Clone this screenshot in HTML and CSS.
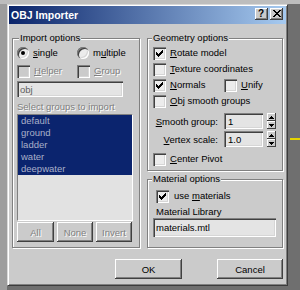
FILE: index.html
```html
<!DOCTYPE html>
<html>
<head>
<meta charset="utf-8">
<link rel="stylesheet" href="styles.css">
</head>
<body>
<div class="desk">
  <div class="dialog">
    <div class="titlebar">
      <span class="title">OBJ Importer</span>
      <div class="tbuttons">
        <span class="tbtn help">?</span>
        <span class="tbtn close"><svg width="8" height="7" viewBox="0 0 8 7" shape-rendering="crispEdges"><path d="M0 0h2v1H0zM6 0h2v1H6zM1 1h2v1H1zM5 1h2v1H5zM2 2h4v1H2zM3 3h2v1H3zM2 4h4v1H2zM1 5h2v1H1zM5 5h2v1H5zM0 6h2v1H0zM6 6h2v1H6z"/></svg></span>
      </div>
    </div>
    <div class="client">
      <div class="groups">
        <fieldset class="group import">
          <legend>Import options</legend>
          <div class="pair radios">
            <span class="opt"><span class="radio"><span class="dot"></span></span><span class="lbl"><u>s</u>ingle</span></span>
            <span class="opt"><span class="radio"></span><span class="lbl">m<u>u</u>ltiple</span></span>
          </div>
          <div class="pair checks disabled">
            <span class="opt"><span class="cb off"></span><span class="lbl"><u>H</u>elper</span></span>
            <span class="opt"><span class="cb off"></span><span class="lbl"><u>G</u>roup</span></span>
          </div>
          <div class="field objbox">obj</div>
          <div class="caption disabled">Select groups to import</div>
          <div class="list">
            <div class="item">default</div>
            <div class="item">ground</div>
            <div class="item">ladder</div>
            <div class="item">water</div>
            <div class="item">deepwater</div>
          </div>
          <div class="btnrow">
            <span class="btn disabled">All</span>
            <span class="btn disabled">None</span>
            <span class="btn disabled">Invert</span>
          </div>
        </fieldset>
        <div class="rightcol">
          <fieldset class="group geo">
            <legend>Geometry options</legend>
            <div class="row"><span class="cb"><svg class="chk" width="7" height="7" viewBox="0 0 7 7" shape-rendering="crispEdges"><path d="M6 0h1v1H6zM5 1h2v1H5zM0 2h1v1H0zM4 2h3v1H4zM0 3h2v1H0zM3 3h3v1H3zM0 4h5v1H0zM1 5h3v1H1zM2 6h1v1H2z"/></svg></span><span class="lbl"><u>R</u>otate model</span></div>
            <div class="row"><span class="cb"></span><span class="lbl"><u>T</u>exture coordinates</span></div>
            <div class="row">
              <span class="opt wide"><span class="cb"><svg class="chk" width="7" height="7" viewBox="0 0 7 7" shape-rendering="crispEdges"><path d="M6 0h1v1H6zM5 1h2v1H5zM0 2h1v1H0zM4 2h3v1H4zM0 3h2v1H0zM3 3h3v1H3zM0 4h5v1H0zM1 5h3v1H1zM2 6h1v1H2z"/></svg></span><span class="lbl"><u>N</u>ormals</span></span>
              <span class="opt"><span class="cb"></span><span class="lbl"><u>U</u>nify</span></span>
            </div>
            <div class="row"><span class="cb"></span><span class="lbl"><u>O</u>bj smooth groups</span></div>
            <div class="spinrow first">
              <span class="slbl"><u>S</u>mooth group:</span>
              <span class="field num">1</span>
              <span class="spin">
                <span class="sb"><svg width="5" height="3" viewBox="0 0 5 3" shape-rendering="crispEdges"><path d="M2 0h1v1h1v1h1v1H0V2h1V1h1z"/></svg></span>
                <span class="sb"><svg width="5" height="3" viewBox="0 0 5 3" shape-rendering="crispEdges"><path d="M0 0h5v1H4v1H3v1H2V2H1V1H0z"/></svg></span>
              </span>
            </div>
            <div class="spinrow">
              <span class="slbl"><u>V</u>ertex scale:</span>
              <span class="field num">1.0</span>
              <span class="spin">
                <span class="sb"><svg width="5" height="3" viewBox="0 0 5 3" shape-rendering="crispEdges"><path d="M2 0h1v1h1v1h1v1H0V2h1V1h1z"/></svg></span>
                <span class="sb"><svg width="5" height="3" viewBox="0 0 5 3" shape-rendering="crispEdges"><path d="M0 0h5v1H4v1H3v1H2V2H1V1H0z"/></svg></span>
              </span>
            </div>
            <div class="row pivot"><span class="cb"></span><span class="lbl"><u>C</u>enter Pivot</span></div>
          </fieldset>
          <fieldset class="group mat">
            <legend>Material options</legend>
            <div class="row userow"><span class="cb"><svg class="chk" width="7" height="7" viewBox="0 0 7 7" shape-rendering="crispEdges"><path d="M6 0h1v1H6zM5 1h2v1H5zM0 2h1v1H0zM4 2h3v1H4zM0 3h2v1H0zM3 3h3v1H3zM0 4h5v1H0zM1 5h3v1H1zM2 6h1v1H2z"/></svg></span><span class="lbl use">use <u>m</u>aterials</span></div>
            <div class="caption libcap">Material Library</div>
            <div class="field libbox">materials.mtl</div>
          </fieldset>
        </div>
      </div>
      <div class="actions">
        <span class="btn okbtn">OK</span>
        <span class="btn cancelbtn">Cancel</span>
      </div>
    </div>
  </div>
</div>
</body>
</html>
```

FILE: styles.css
```css
* { box-sizing: border-box; }
html, body { margin: 0; }
body {
  width: 300px;
  height: 290px;
  overflow: hidden;
  font-family: "Liberation Sans", Arial, sans-serif;
  font-size: 9.5px;
  color: #000;
  background:
    linear-gradient(#e6d400, #e6d400) 290px 138px / 10px 2px no-repeat,
    linear-gradient(#bdbdbd, #bdbdbd) 0 0 / 100% 4px no-repeat,
    linear-gradient(#9d9d9d, #9d9d9d) 0 0 / 7px 100% no-repeat,
    #6f6f6f;
}
.desk { padding: 4px 0 0 7px; }
.dialog {
  width: 281px;
  height: 282px;
  background: #cbcbcb;
  border: 1px solid;
  border-color: #d8d8d8 #3c3c3c #3c3c3c #d8d8d8;
  box-shadow: inset 1px 1px 0 #fff, inset -1px -1px 0 #808080;
  padding: 1px;
  display: flex;
  flex-direction: column;
}
.titlebar {
  height: 18px;
  flex: none;
  display: flex;
  align-items: center;
  padding: 0 3px 0 2px;
  background: linear-gradient(to right, #0a246a, #a6caf0);
}
.title {
  color: #fff;
  font-weight: bold;
  font-size: 10.5px;
}
.tbuttons {
  margin-left: auto;
  align-self: flex-start;
  margin-top: 2px;
  display: flex;
  gap: 2px;
}
.tbtn {
  width: 13px;
  height: 12px;
  background: #cbcbcb;
  box-shadow: inset -1px -1px 0 #404040, inset 1px 1px 0 #fff, inset -2px -2px 0 #808080;
  display: flex;
  align-items: center;
  justify-content: center;
}
.help {
  font-weight: bold;
  font-size: 10px;
  line-height: 12px;
  padding: 0 1px 0 0;
}
.close svg { display: block; margin-top: -1px; }
.client {
  flex: 1;
  display: flex;
  flex-direction: column;
  padding: 8px 3px 5px 3px;
}
.groups {
  display: grid;
  grid-template-columns: 128px 136px;
  column-gap: 7px;
  align-items: start;
}
.group {
  margin: 0;
  min-width: 0;
  border: 1px solid #808080;
  box-shadow: 1px 1px 0 #fff, inset 1px 1px 0 #fff;
}
.group legend {
  padding: 0 1px;
  line-height: 12px;
  height: 12px;
  background: #cbcbcb;
}
.import { padding: 2px 6px 5px 4px; }
.import legend { margin-left: 2px; }
.geo { padding: 1px 5px 3px 5px; }
.geo legend, .mat legend { margin-left: -1px; }
.mat { margin-top: 2px; padding: 4px 5px 10px 5px; }
.rightcol { display: flex; flex-direction: column; }

.pair {
  display: grid;
  grid-template-columns: 60px auto;
  height: 14px;
  align-items: center;
}
.checks { margin-top: 4px; }
.opt { display: flex; align-items: center; }
.opt.wide { width: 71px; }
.lbl { margin-left: 4px; line-height: 12px; white-space: nowrap; }
.radios .lbl { margin-left: 4px; }
.radio {
  width: 12px;
  height: 12px;
  flex: none;
  border-radius: 50%;
  background: #ececec;
  box-shadow: inset 1px 1px 0 #808080, inset 2px 2px 0 #404040, inset -1px -1px 0 #fff, inset -2px -2px 0 #d6d6d6;
  display: flex;
  align-items: center;
  justify-content: center;
}
.dot { width: 4px; height: 4px; border-radius: 50%; background: #000; }
.cb {
  width: 13px;
  height: 13px;
  flex: none;
  background: #ececec;
  box-shadow: inset 1px 1px 0 #808080, inset 2px 2px 0 #404040, inset -1px -1px 0 #fff, inset -2px -2px 0 #d6d6d6;
  display: flex;
  align-items: center;
  justify-content: center;
}
.cb.off { background: #cbcbcb; }
.chk { display: block; }
.disabled, .disabled .lbl { color: #808080; text-shadow: 1px 1px 0 #fff; }

.field {
  background: #e4e4e4;
  box-shadow: inset 1px 1px 0 #808080, inset 2px 2px 0 #404040, inset -1px -1px 0 #fff, inset -2px -2px 0 #d6d6d6;
  padding-left: 4px;
  display: flex;
  align-items: center;
  white-space: nowrap;
}
.objbox {
  margin-top: 3px;
  width: 106px;
  height: 16px;
  color: #606060;
  padding-left: 3px;
}
.caption { line-height: 12px; height: 12px; }
.import .caption { margin-top: 4px; }
.list {
  margin-top: 1px;
  height: 107px;
  background: #e2e2e2;
  border: 1px solid;
  border-color: #808080 #fff #fff #808080;
}
.item {
  height: 12px;
  line-height: 12px;
  background: #0b246e;
  color: #a9b0c9;
  padding-left: 3px;
}
.btnrow {
  margin-top: 1px;
  display: grid;
  grid-template-columns: 37px 36px 36px;
  column-gap: 3px;
  height: 20px;
}
.btn {
  background: #cbcbcb;
  box-shadow: inset -1px -1px 0 #404040, inset 1px 1px 0 #fff, inset -2px -2px 0 #808080;
  display: flex;
  align-items: center;
  justify-content: center;
  height: 20px;
}

.row { display: flex; align-items: center; height: 16px; }
.spinrow { display: flex; align-items: center; height: 16px; margin-top: 2px; }
.spinrow.first { margin-top: 4px; }
.slbl { width: 71px; flex: none; text-align: right; padding-right: 6px; white-space: nowrap; }
.num { width: 39px; height: 16px; flex: none; }
.spin {
  margin-left: 4px;
  width: 9px;
  height: 16px;
  display: flex;
  flex-direction: column;
}
.sb {
  height: 8px;
  background: #cbcbcb;
  box-shadow: inset -1px -1px 0 #404040, inset 1px 1px 0 #fff;
  display: flex;
  align-items: center;
  justify-content: center;
}
.sb svg { display: block; }
.pivot { margin-top: 4px; }

.userow { height: 14px; padding-left: 3px; }
.lbl.use { margin-left: 5px; }
.libcap { margin-top: 3px; padding-left: 3px; }
.libbox { height: 19px; width: 123px; padding-left: 3px; }

.actions {
  margin-top: auto;
  display: flex;
  justify-content: flex-end;
  gap: 35px;
}
.okbtn { width: 67px; }
.cancelbtn { width: 66px; }
```
